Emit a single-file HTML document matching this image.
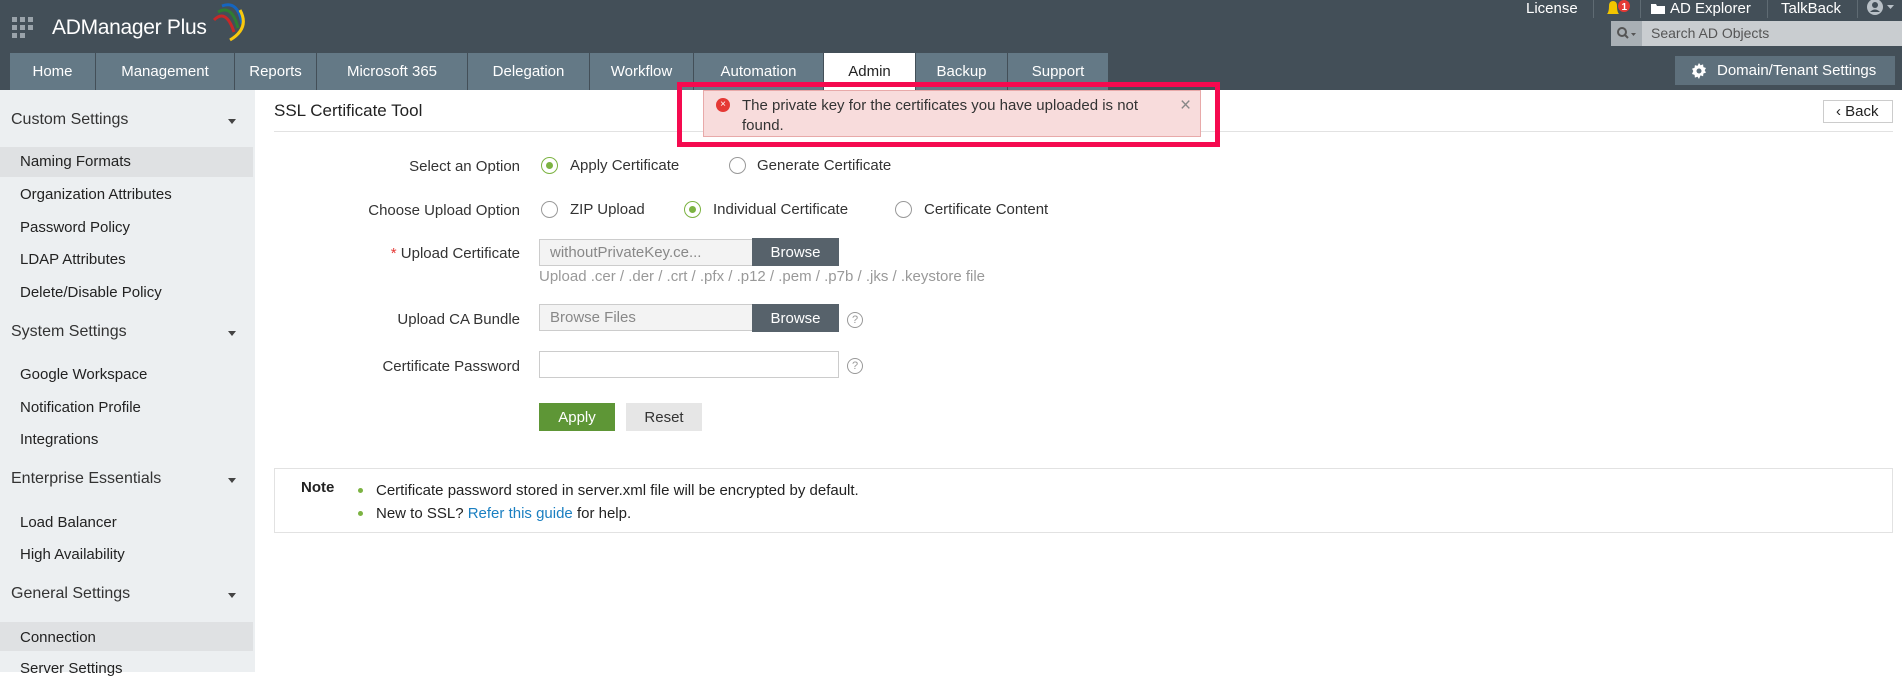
<!DOCTYPE html>
<html><head><meta charset="utf-8"><style>
*{box-sizing:border-box;margin:0;padding:0}
body{width:1902px;height:672px;overflow:hidden;background:#fff;font-family:"Liberation Sans",sans-serif;color:#222;position:relative;font-size:15px}
.abs{position:absolute;white-space:nowrap}
#hdr{position:absolute;left:0;top:0;width:1902px;height:90px;background:#434f58}
.tab{position:absolute;top:53px;height:37px;background:#647986;color:#fff;font-size:15px;line-height:37px;text-align:center}
.tab.act{background:#fff;color:#222}
#side{position:absolute;left:0;top:90px;width:255px;height:582px;background:#eceff1}
.sh{position:absolute;left:11px;font-size:16px;color:#333}
.sh:after{content:"";position:absolute;left:217px;top:8px;border:4px solid transparent;border-top:5px solid #444}
.si{position:absolute;left:20px;font-size:15px;color:#222}
.hl{position:absolute;left:0;width:253px;background:#dfe1e3}
.lbl{position:absolute;right:1382px;font-size:15px;color:#333;text-align:right;white-space:nowrap}
.rad{position:absolute;width:17px;height:17px;border:1.5px solid #999;border-radius:50%;background:#fff}
.rad.on{border-color:#7cb342}
.rad.on:after{content:"";position:absolute;left:3.5px;top:3.5px;width:7px;height:7px;border-radius:50%;background:#7cb342}
.rt{position:absolute;font-size:15px;color:#333;white-space:nowrap}
.inp{position:absolute;border:1px solid #ccc;background:#f3f3f3;color:#888;font-size:15px;padding-left:10px;line-height:26px}
.btn{position:absolute;background:#57626b;color:#fff;text-align:center;font-size:15px}
.help{position:absolute;width:16px;height:16px;border:1px solid #999;border-radius:50%;color:#999;font-size:11px;text-align:center;line-height:14px}
</style></head><body>
<div id="hdr"></div>
<svg class="abs" style="left:12px;top:17px" width="22" height="22"><g fill="#9aa3aa"><rect x="0" y="0" width="5" height="5"/><rect x="8" y="0" width="5" height="5"/><rect x="16" y="0" width="5" height="5"/><rect x="0" y="8" width="5" height="5"/><rect x="8" y="8" width="5" height="5"/><rect x="16" y="8" width="5" height="5"/><rect x="0" y="16" width="5" height="5"/><rect x="8" y="16" width="5" height="5"/><rect x="0" y="16" width="5" height="5"/></g></svg>
<div class="abs" style="left:52px;top:16px;font-size:21px;color:#fff;letter-spacing:-0.3px">ADManager Plus</div>
<svg class="abs" style="left:200px;top:2px" width="50" height="40"><path d="M14 18 Q26 6 34 30" stroke="#c62828" stroke-width="3" fill="none"/><path d="M18 10 Q32 2 38 26" stroke="#2e7d32" stroke-width="3" fill="none"/><path d="M22 4 Q38 -2 42 22" stroke="#1565c0" stroke-width="3" fill="none"/><path d="M40 8 Q50 26 30 38" stroke="#f9c80e" stroke-width="3" fill="none"/></svg>
<div class="abs" style="left:1526px;top:0;color:#fff;font-size:15px">License</div>
<div class="abs" style="left:1593px;top:0;width:1px;height:18px;background:#5f6b73"></div>
<svg class="abs" style="left:1603px;top:0" width="28" height="18"><path d="M4 14 Q6 12 6 6 Q6 1 10 1 Q14 1 14 6 Q14 12 16 14Z" fill="#f2c500"/><circle cx="21" cy="6" r="6" fill="#e53935"/><text x="18.5" y="10" font-size="10" fill="#fff" font-family="Liberation Sans" font-weight="bold">1</text></svg>
<div class="abs" style="left:1640px;top:0;width:1px;height:18px;background:#5f6b73"></div>
<svg class="abs" style="left:1651px;top:2px" width="14" height="12"><path d="M0 2h5l1 2h8v8H0z" fill="#fff"/></svg>
<div class="abs" style="left:1670px;top:0;color:#fff;font-size:15px">AD Explorer</div>
<div class="abs" style="left:1767px;top:0;width:1px;height:18px;background:#5f6b73"></div>
<div class="abs" style="left:1781px;top:0;color:#fff;font-size:15px">TalkBack</div>
<div class="abs" style="left:1857px;top:0;width:1px;height:18px;background:#5f6b73"></div>
<svg class="abs" style="left:1866px;top:0" width="36" height="16"><circle cx="9" cy="7" r="8" fill="#b8c0c6"/><circle cx="9" cy="5" r="3" fill="#434f58"/><path d="M4 12 Q9 7 14 12" fill="#434f58"/><path d="M21 5h7l-3.5 4z" fill="#b8c0c6"/></svg>
<div class="abs" style="left:1611px;top:21px;width:291px;height:25px;background:#c9cdd0"></div>
<div class="abs" style="left:1611px;top:21px;width:31px;height:25px;background:#a9b0b5"></div>
<svg class="abs" style="left:1617px;top:27px" width="22" height="14"><circle cx="5" cy="5" r="4" stroke="#555" stroke-width="2" fill="none"/><path d="M8 8l3 3" stroke="#555" stroke-width="2"/><path d="M14 6h5l-2.5 3z" fill="#555"/></svg>
<div class="abs" style="left:1651px;top:25px;font-size:14px;color:#555">Search AD Objects</div>
<div class="tab" style="left:10px;width:85px">Home</div>
<div class="tab" style="left:96px;width:138px">Management</div>
<div class="tab" style="left:235px;width:81px">Reports</div>
<div class="tab" style="left:317px;width:150px">Microsoft 365</div>
<div class="tab" style="left:468px;width:121px">Delegation</div>
<div class="tab" style="left:590px;width:103px">Workflow</div>
<div class="tab" style="left:694px;width:129px">Automation</div>
<div class="tab act" style="left:824px;width:91px">Admin</div>
<div class="tab" style="left:916px;width:91px">Backup</div>
<div class="tab" style="left:1008px;width:100px">Support</div>
<div class="abs" style="left:1675px;top:56px;width:220px;height:29px;background:#5e707c;color:#fff;font-size:15px;line-height:30px;padding-left:42px">Domain/Tenant Settings</div>
<svg class="abs" style="left:1691px;top:63px" width="16" height="16" viewBox="0 0 16 16"><path d="M8 0l1.5 2.2 2.6-.8.3 2.7 2.6.9-1.3 2.3 1.3 2.3-2.6.9-.3 2.7-2.6-.8L8 16l-1.5-2.2-2.6.8-.3-2.7-2.6-.9L2.3 8 1 5.7l2.6-.9.3-2.7 2.6.8z" fill="#fff"/><circle cx="8" cy="8" r="2.5" fill="#5e707c"/></svg>

<div id="side"></div>
<div class="hl" style="top:147px;height:30px"></div>
<div class="hl" style="top:622px;height:29px"></div>
<div class="sh" style="top:111px">Custom Settings</div>
<div class="si" style="top:153px">Naming Formats</div>
<div class="si" style="top:186px">Organization Attributes</div>
<div class="si" style="top:219px">Password Policy</div>
<div class="si" style="top:251px">LDAP Attributes</div>
<div class="si" style="top:284px">Delete/Disable Policy</div>
<div class="sh" style="top:323px">System Settings</div>
<div class="si" style="top:366px">Google Workspace</div>
<div class="si" style="top:399px">Notification Profile</div>
<div class="si" style="top:431px">Integrations</div>
<div class="sh" style="top:470px">Enterprise Essentials</div>
<div class="si" style="top:514px">Load Balancer</div>
<div class="si" style="top:546px">High Availability</div>
<div class="sh" style="top:585px">General Settings</div>
<div class="si" style="top:629px">Connection</div>
<div class="si" style="top:660px">Server Settings</div>

<div class="abs" style="left:274px;top:101px;font-size:17px;color:#222">SSL Certificate Tool</div>
<div class="abs" style="left:274px;top:131px;width:1619px;height:1px;background:#e2e2e2"></div>
<div class="abs" style="left:1823px;top:100px;width:70px;height:23px;border:1px solid #ccc;font-size:15px;line-height:21px;padding-left:12px;color:#222">&#8249; Back</div>

<div class="abs" style="left:677px;top:82px;width:543px;height:65px;border:5px solid #f50a4f"></div>
<div class="abs" style="left:703px;top:90px;width:498px;height:47px;background:#f8dcdc;border:1px solid #e8a9a9"></div>
<div class="abs" style="left:716px;top:98px;width:14px;height:14px;border-radius:50%;background:#e53935;color:#fff;font-size:10px;line-height:14px;text-align:center">×</div>
<div class="abs" style="left:742px;top:96px;font-size:15px;color:#333;line-height:20px">The private key for the certificates you have uploaded is not<br>found.</div>
<div class="abs" style="left:1180px;top:95px;font-size:19px;color:#888">×</div>

<div class="lbl" style="top:158px">Select an Option</div>
<div class="rad on" style="left:541px;top:157px"></div><div class="rt" style="left:570px;top:157px">Apply Certificate</div>
<div class="rad" style="left:729px;top:157px"></div><div class="rt" style="left:757px;top:157px">Generate Certificate</div>
<div class="lbl" style="top:202px">Choose Upload Option</div>
<div class="rad" style="left:541px;top:201px"></div><div class="rt" style="left:570px;top:201px">ZIP Upload</div>
<div class="rad on" style="left:684px;top:201px"></div><div class="rt" style="left:713px;top:201px">Individual Certificate</div>
<div class="rad" style="left:895px;top:201px"></div><div class="rt" style="left:924px;top:201px">Certificate Content</div>
<div class="lbl" style="top:245px"><span style="color:#e53935">* </span>Upload Certificate</div>
<div class="inp" style="left:539px;top:239px;width:214px;height:27px">withoutPrivateKey.ce...</div>
<div class="btn" style="left:752px;top:238px;width:87px;height:28px;line-height:29px">Browse</div>
<div class="abs" style="left:539px;top:268px;font-size:15px;color:#999">Upload .cer / .der / .crt / .pfx / .p12 / .pem / .p7b / .jks / .keystore file</div>
<div class="lbl" style="top:311px">Upload CA Bundle</div>
<div class="inp" style="left:539px;top:304px;width:214px;height:27px">Browse Files</div>
<div class="btn" style="left:752px;top:304px;width:87px;height:28px;line-height:29px">Browse</div>
<div class="help" style="left:847px;top:312px">?</div>
<div class="lbl" style="top:358px">Certificate Password</div>
<div class="abs" style="left:539px;top:351px;width:300px;height:27px;border:1px solid #ccc;background:#fff"></div>
<div class="help" style="left:847px;top:358px">?</div>
<div class="btn" style="left:539px;top:403px;width:76px;height:28px;line-height:29px;background:#5e9636">Apply</div>
<div class="btn" style="left:626px;top:403px;width:76px;height:28px;line-height:29px;background:#e6e6e6;color:#333">Reset</div>

<div class="abs" style="left:274px;top:468px;width:1619px;height:65px;border:1px solid #e2e2e2"></div>
<div class="abs" style="left:301px;top:479px;font-size:15px;font-weight:bold;color:#222">Note</div>
<div class="abs" style="left:358px;top:488px;width:5px;height:5px;border-radius:50%;background:#7cb342"></div>
<div class="abs" style="left:376px;top:482px;font-size:15px;color:#222">Certificate password stored in server.xml file will be encrypted by default.</div>
<div class="abs" style="left:358px;top:511px;width:5px;height:5px;border-radius:50%;background:#7cb342"></div>
<div class="abs" style="left:376px;top:505px;font-size:15px;color:#222">New to SSL? <span style="color:#1a7fc1">Refer this guide</span> for help.</div>
</body></html>
